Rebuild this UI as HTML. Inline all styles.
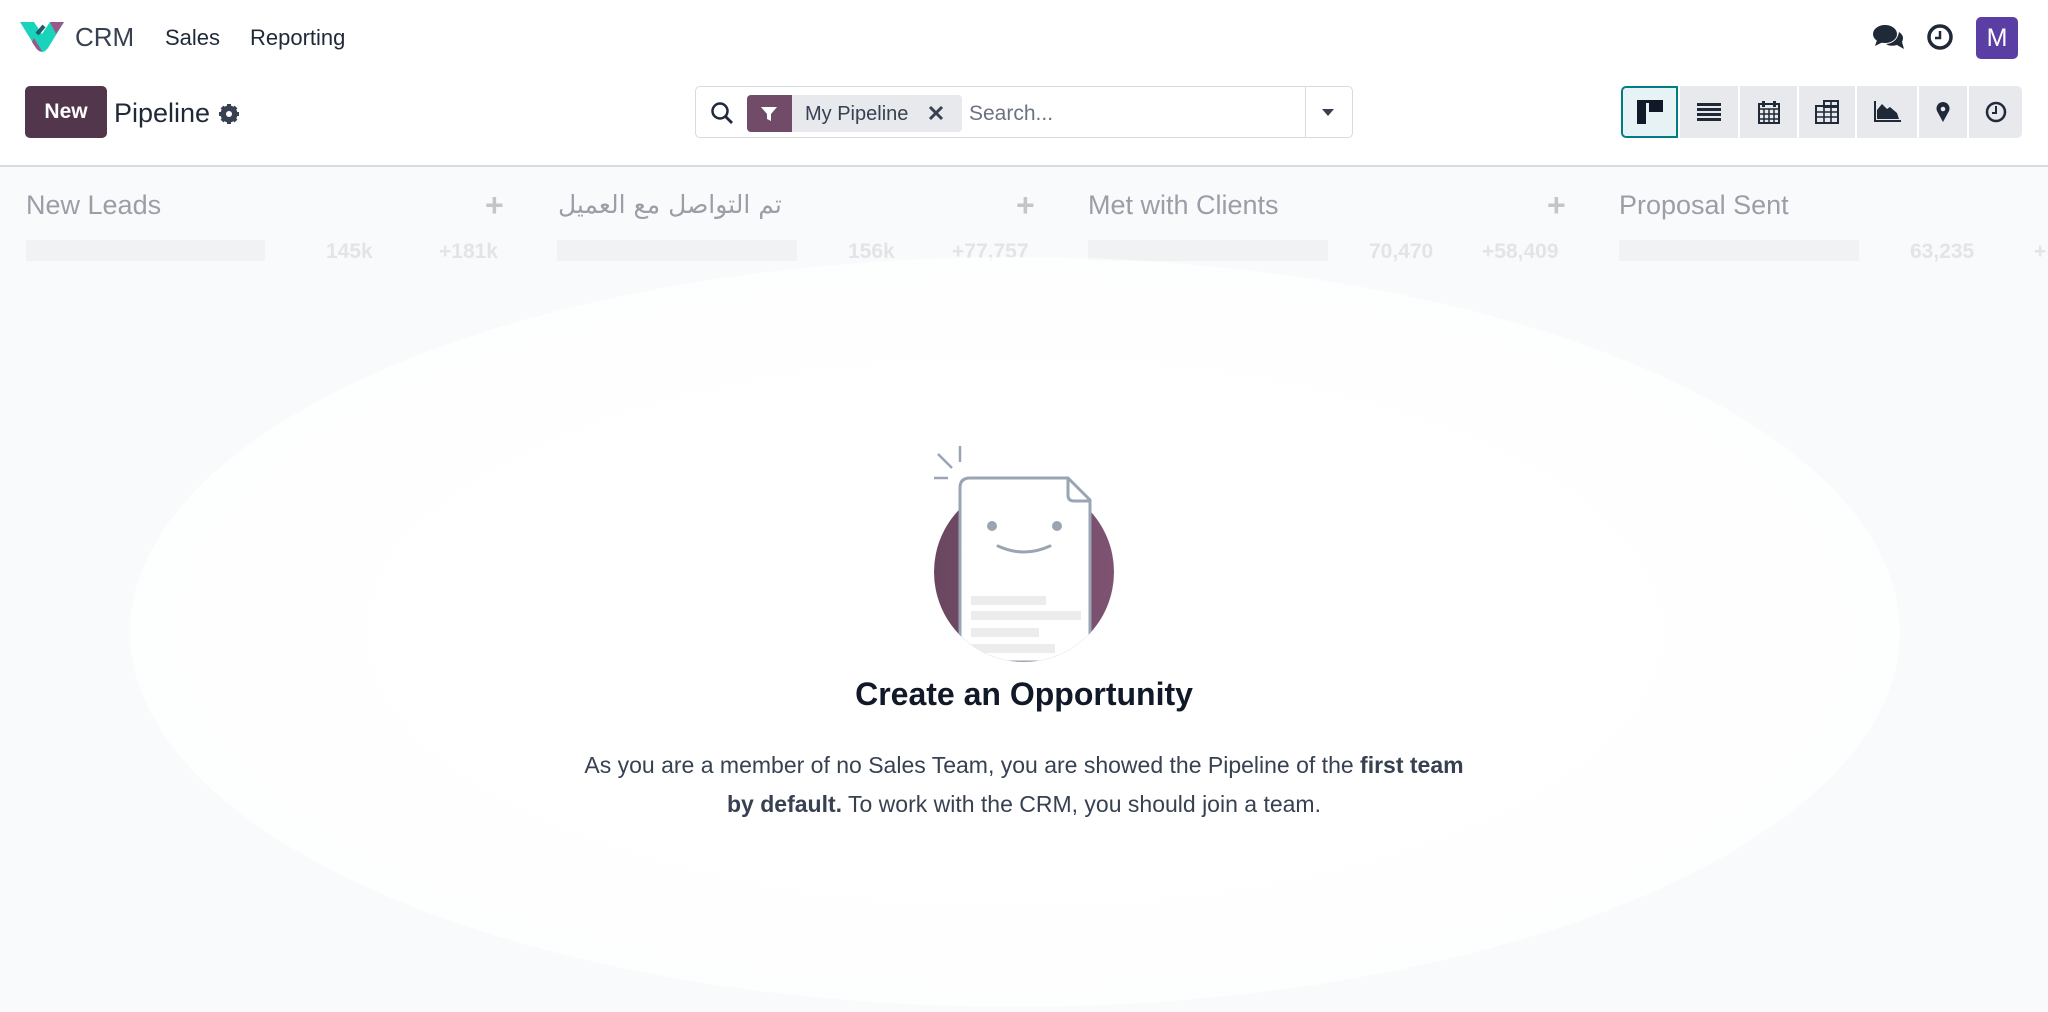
<!DOCTYPE html>
<html><head><meta charset="utf-8"><style>
*{box-sizing:border-box;margin:0;padding:0}
html,body{width:2048px;height:1012px;overflow:hidden}
body{background:#fff;font-family:"Liberation Sans","DejaVu Sans",sans-serif;color:#1f2937;position:relative}
.abs{position:absolute}
.nav{font-size:22px;color:#1f2937}
.vbtn{position:absolute;top:86px;height:52px;background:#e7e9ed;display:flex;align-items:center;justify-content:center}
.col{position:absolute;top:23px;font-size:27px;color:#9a9ea6}
.plus{position:absolute;top:20px;font-size:32px;color:#c3c5ca;font-weight:bold}
.bar{position:absolute;top:73px;height:21px;background:#f1f2f4}
.num{position:absolute;top:73px;font-size:21px;font-weight:bold;color:#e3e4e7}
</style></head><body>
<svg class="abs" style="left:20px;top:20px" width="44" height="34" viewBox="0 0 44 34">
<path d="M0 2 L14 2 L22 14 L30 2 L44 2 L28 28 Q22 36 16 28 Z" fill="#1ad3bb"/>
<path d="M30 2 L44 2 L36 14 Z" fill="#9c5789"/>
<path d="M12 22 L16 28 Q19 32 22 31 L14 18 Z" fill="#9c5789"/>
<path d="M17 14 L24 6" stroke="#1f5b6b" stroke-width="4"/>
</svg>
<div class="abs" style="left:75px;top:22px;font-size:26px;color:#374151">CRM</div>
<div class="abs nav" style="left:165px;top:25px">Sales</div>
<div class="abs nav" style="left:250px;top:25px">Reporting</div>
<svg class="abs" style="left:1873px;top:24px" width="32" height="28" viewBox="0 0 32 28"><ellipse cx="12" cy="10" rx="12" ry="9" fill="#1f2937"/><path d="M4 16 L2 22 L10 18Z" fill="#1f2937"/><path d="M26 8 Q32 12 29 18 L31 25 L24 21 Q17 23 13 20 Q24 19 26 8Z" fill="#1f2937"/></svg>
<svg class="abs" style="left:1926px;top:23px" width="28" height="28" viewBox="0 0 28 28"><circle cx="14" cy="14" r="11" fill="none" stroke="#1f2937" stroke-width="3.5"/><path d="M14 8 V15 H9" fill="none" stroke="#1f2937" stroke-width="2.5"/></svg>
<div class="abs" style="left:1976px;top:17px;width:42px;height:42px;background:#5a3ea4;border-radius:5px;color:#fff;font-size:25px;text-align:center;line-height:42px">M</div>
<div class="abs" style="left:25px;top:86px;width:82px;height:52px;background:#52364b;border-radius:5px;color:#fff;font-weight:bold;font-size:21px;text-align:center;line-height:52px">New</div>
<div class="abs" style="left:114px;top:98px;font-size:27px;color:#1f2937">Pipeline</div>
<svg class="abs" style="left:219px;top:104px" width="20" height="20" viewBox="0 0 20 20"><circle cx="10" cy="10" r="6.5" fill="none" stroke="#374151" stroke-width="4"/><g stroke="#374151" stroke-width="4"><path d="M10 0V20M0 10H20M3 3L17 17M17 3L3 17"/></g><circle cx="10" cy="10" r="3" fill="#fff"/></svg>
<div class="abs" style="left:695px;top:86px;width:658px;height:52px;border:1px solid #d8dadd;border-radius:5px"></div>
<div class="abs" style="left:1305px;top:87px;width:1px;height:50px;background:#d8dadd"></div>
<svg class="abs" style="left:1320px;top:107px" width="16" height="10"><path d="M2 2H14L8 9Z" fill="#374151"/></svg>
<svg class="abs" style="left:710px;top:101px" width="26" height="26" viewBox="0 0 26 26"><circle cx="10" cy="10" r="7.5" fill="none" stroke="#1f2937" stroke-width="2.5"/><path d="M15.5 15.5L22 22" stroke="#1f2937" stroke-width="2.8"/></svg>
<div class="abs" style="left:747px;top:95px;width:215px;height:37px;background:#e7e9ed;border-radius:4px"></div>
<div class="abs" style="left:747px;top:95px;width:45px;height:37px;background:#714b67;border-radius:4px 0 0 4px"></div>
<svg class="abs" style="left:760px;top:105px" width="18" height="18" viewBox="0 0 18 18"><path d="M1 2H17L11 9V16L7 14V9Z" fill="#fff"/></svg>
<div class="abs" style="left:805px;top:103px;font-size:20px;color:#374151">My Pipeline</div>
<svg class="abs" style="left:928px;top:105px" width="16" height="16"><path d="M2 2L14 14M14 2L2 14" stroke="#374151" stroke-width="3"/></svg>
<div class="abs" style="left:969px;top:102px;font-size:21px;color:#6b7280">Search...</div>
<div class="vbtn" style="left:1621px;width:57px;background:#e6f2f3;border:2px solid #017e84;border-radius:5px 0 0 5px"><svg width="26" height="24"><rect x="0" y="0" width="26" height="3" fill="#111827"/><rect x="0" y="0" width="9" height="24" fill="#111827"/><rect x="12" y="0" width="14" height="12" fill="#111827"/></svg></div>
<div class="vbtn" style="left:1680px;width:58px"><svg width="24" height="20"><g fill="#1f2937"><rect y="1" width="24" height="3"/><rect y="6" width="24" height="3"/><rect y="11" width="24" height="3"/><rect y="16" width="24" height="3"/></g></svg></div>
<div class="vbtn" style="left:1740px;width:57px"><svg width="22" height="24"><rect x="1" y="4" width="20" height="19" fill="none" stroke="#1f2937" stroke-width="2"/><path d="M1 9H21M1 14H21M1 19H21M6 9V23M11 9V23M16 9V23" stroke="#1f2937" stroke-width="1.5"/><rect x="4" y="1" width="3" height="6" fill="#1f2937"/><rect x="15" y="1" width="3" height="6" fill="#1f2937"/></svg></div>
<div class="vbtn" style="left:1799px;width:56px"><svg width="24" height="24"><rect x="1" y="6" width="22" height="17" fill="none" stroke="#1f2937" stroke-width="2"/><rect x="9" y="1" width="14" height="6" fill="none" stroke="#1f2937" stroke-width="2"/><path d="M1 12H23M1 17H23M9 6V23M16 1V23" stroke="#1f2937" stroke-width="1.6"/></svg></div>
<div class="vbtn" style="left:1857px;width:60px"><svg width="28" height="22"><path d="M2 0V20H28" fill="none" stroke="#1f2937" stroke-width="2"/><path d="M4 18V9L9 3L14 8L17 6L24 12L26 18Z" fill="#1f2937"/></svg></div>
<div class="vbtn" style="left:1919px;width:48px"><svg width="14" height="20"><path d="M7 20L1 9A6.5 6.5 0 1 1 13 9Z" fill="#1f2937"/><circle cx="7" cy="7" r="2.3" fill="#e7e9ed"/></svg></div>
<div class="vbtn" style="left:1969px;width:53px;border-radius:0 5px 5px 0"><svg width="22" height="22"><circle cx="11" cy="11" r="9" fill="none" stroke="#1f2937" stroke-width="2.5"/><path d="M11 5V12H7" fill="none" stroke="#1f2937" stroke-width="2"/></svg></div>
<div class="abs" style="left:0;top:165px;width:2048px;height:2px;background:#d8dadd"></div>
<div class="abs" style="left:0;top:167px;width:2048px;height:845px;background:#f9fafb;overflow:hidden">
<div class="col" style="left:26px">New Leads</div>
<div class="plus" style="left:485px">+</div>
<div class="bar" style="left:26px;width:239px"></div>
<div class="num" style="left:326px">145k</div><div class="num" style="left:439px">+181k</div>
<div class="col" style="left:558px;width:240px;direction:rtl;text-align:left;font-family:'DejaVu Sans',sans-serif;font-size:25px">تم التواصل مع العميل</div>
<div class="plus" style="left:1016px">+</div>
<div class="bar" style="left:557px;width:240px"></div>
<div class="num" style="left:848px">156k</div><div class="num" style="left:952px">+77,757</div>
<div class="col" style="left:1088px">Met with Clients</div>
<div class="plus" style="left:1547px">+</div>
<div class="bar" style="left:1088px;width:240px"></div>
<div class="num" style="left:1369px">70,470</div><div class="num" style="left:1482px">+58,409</div>
<div class="col" style="left:1619px">Proposal Sent</div>
<div class="bar" style="left:1619px;width:240px"></div>
<div class="num" style="left:1910px">63,235</div><div class="num" style="left:2034px">+</div>
<div class="abs" style="left:130px;top:90px;width:1770px;height:750px;border-radius:50%;background:radial-gradient(ellipse at center,#ffffff 45%,rgba(255,255,255,0.6) 80%,rgba(255,255,255,0) 100%)"></div>
</div>
<svg class="abs" style="left:920px;top:440px" width="210" height="230" viewBox="0 0 210 230">
<defs><linearGradient id="g" x1="0" x2="1"><stop offset="0" stop-color="#6a4760"/><stop offset="1" stop-color="#7e5271"/></linearGradient><clipPath id="c"><circle cx="104" cy="132" r="90"/></clipPath></defs>
<circle cx="104" cy="132" r="90" fill="url(#g)"/>
<g clip-path="url(#c)"><path d="M40 222V48Q40 38 50 38H148L170 60V222Z" fill="#fff" stroke="#9aa5b4" stroke-width="3"/>
<rect x="51" y="156" width="75" height="9" fill="#ececec"/><rect x="51" y="171" width="110" height="9" fill="#ececec"/><rect x="51" y="188" width="68" height="9" fill="#ececec"/><rect x="51" y="204" width="84" height="9" fill="#ececec"/></g>
<path d="M40 110V48Q40 38 50 38H148L170 60V120" fill="#fff" stroke="#9aa5b4" stroke-width="3"/>
<path d="M148 38V55Q148 61 154 61H170" fill="none" stroke="#9aa5b4" stroke-width="3"/>
<circle cx="72" cy="86" r="5" fill="#9aa5b4"/><circle cx="137" cy="86" r="5" fill="#9aa5b4"/>
<path d="M78 106Q104 118 130 106" fill="none" stroke="#9aa5b4" stroke-width="3" stroke-linecap="round"/>
<path d="M18 14L32 28M40 6V22M14 38H28" stroke="#9aa5b4" stroke-width="2.5"/>
</svg>
<div class="abs" style="left:0;top:676px;width:2048px;text-align:center;font-size:32px;font-weight:bold;color:#111827">Create an Opportunity</div>
<div class="abs" style="left:474px;top:746px;width:1100px;text-align:center;font-size:23px;line-height:39px;color:#374151">As you are a member of no Sales Team, you are showed the Pipeline of the <b>first team</b><br><b>by default.</b> To work with the CRM, you should join a team.</div>
</body></html>
